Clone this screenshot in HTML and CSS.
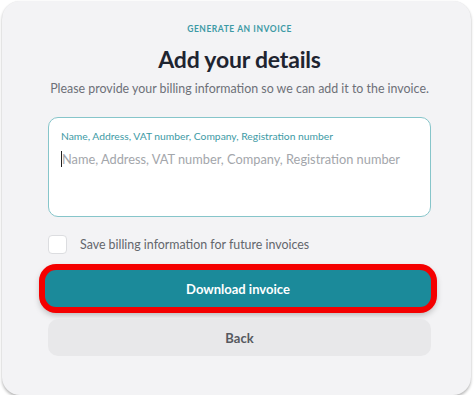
FILE: index.html
```html
<!DOCTYPE html>
<html lang="en">
<head>
<meta charset="utf-8">
<title>Add your details</title>
<link rel="stylesheet" href="styles.css">
</head>
<body>
<div class="card">
  <div class="eyebrow">GENERATE AN INVOICE</div>
  <h1 class="title">Add your details</h1>
  <p class="subtitle">Please provide your billing information so we can add it to the invoice.</p>
  <div class="field">
    <label class="field-label">Name, Address, VAT number, Company, Registration number</label>
    <div class="field-input"><span class="caret"></span><span class="placeholder">Name, Address, VAT number, Company, Registration number</span></div>
  </div>
  <div class="check-row">
    <span class="checkbox"></span>
    <span class="check-label">Save billing information for future invoices</span>
  </div>
  <button class="btn btn-primary">Download invoice</button>
  <button class="btn btn-secondary">Back</button>
</div>
</body>
</html>
```

FILE: styles.css
```css
html, body {
  margin: 0;
  padding: 0;
  background: #ffffff;
}
body {
  padding: 1px 3px 0 2px;
  font-family: "Lato", "Liberation Sans", sans-serif;
}
.card {
  width: 469px;
  height: 394px;
  box-sizing: border-box;
  background: #f3f3f5;
  border-radius: 18px;
  box-shadow: 0 2px 3px rgba(0,0,0,0.28), 0 0 1px rgba(0,0,0,0.08);
  display: flex;
  flex-direction: column;
  align-items: center;
  padding: 22px 40px 0 46px;
}
.eyebrow {
  font-size: 8.5px;
  font-weight: 700;
  letter-spacing: 0.55px;
  color: #3d9aa5;
  line-height: 12px;
}
.title {
  margin: 10px 0 0;
  font-size: 23px;
  font-weight: 700;
  line-height: 28px;
  color: #1e2430;
  letter-spacing: -0.2px;
}
.subtitle {
  margin: 7px 0 0;
  font-size: 12.4px;
  line-height: 18px;
  color: #6d7078;
  white-space: nowrap;
}
.field {
  margin-top: 19px;
  width: 383px;
  height: 100px;
  box-sizing: border-box;
  background: #ffffff;
  border: 1px solid #86c5ca;
  border-radius: 10px;
  padding: 11px 12px;
  align-self: flex-start;
}
.field-label {
  display: block;
  font-size: 10.3px;
  line-height: 14px;
  color: #3d9aa5;
}
.field-input {
  margin-top: 7px;
  display: flex;
  align-items: center;
  font-size: 12.8px;
  line-height: 18px;
  color: #a3a6ab;
  white-space: nowrap;
}
.caret {
  width: 1px;
  height: 16px;
  background: #222;
}
.check-row {
  align-self: flex-start;
  margin-top: 18px;
  display: flex;
  align-items: center;
  gap: 13px;
}
.checkbox {
  width: 17px;
  height: 17px;
  background: #fff;
  border: 1px solid #dcdde0;
  border-radius: 4px;
}
.check-label {
  font-size: 12.4px;
  color: #63666c;
}
.btn {
  border: none;
  font-family: inherit;
  font-weight: 700;
  font-size: 13px;
  cursor: pointer;
  align-self: flex-start;
}
.btn-primary {
  margin-top: 16px;
  margin-left: -3px;
  width: 386px;
  height: 37px;
  background: #1b8a9a;
  color: #ffffff;
  border-radius: 11px;
  box-shadow: 0 0 0 6px #f40000, 0 3px 6px 5px rgba(0,0,0,0.25);
}
.btn-secondary {
  margin-top: 12px;
  width: 383px;
  height: 37px;
  background: #e8e8ea;
  color: #56595f;
  border-radius: 10px;
}
```
